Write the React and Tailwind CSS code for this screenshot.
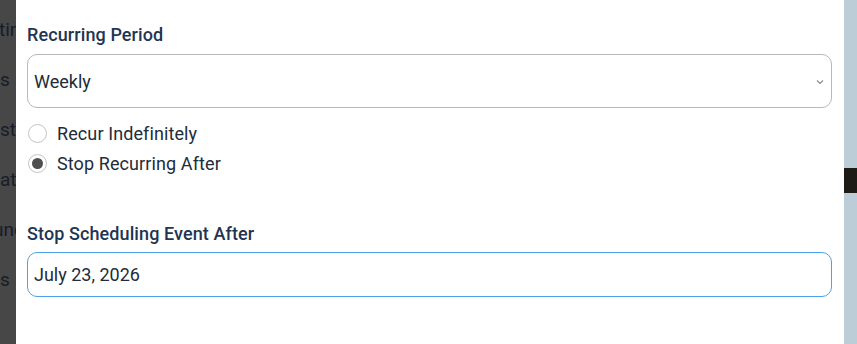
import React from "react";

export default function App() {
  return (
    <div
      className="flex h-[344px] w-[857px] overflow-hidden bg-white"
      style={{ fontFamily: "Roboto, 'Liberation Sans', sans-serif" }}
    >
      <div className="relative w-[16px] shrink-0 overflow-hidden bg-[#474747]">
        <div className="absolute left-0 top-0 flex flex-col items-start whitespace-nowrap pt-[5px] text-[19px] leading-[50px] text-[#171d27]">
          <span className="-ml-[1px]">tin</span>
          <span>s</span>
          <span>st</span>
          <span>at</span>
          <span className="-ml-[7px]">unc</span>
          <span>s</span>
        </div>
      </div>
      <div className="flex flex-1 flex-col bg-white pl-[11px] pr-[12px] pt-[24px] text-[#1f3552]">
        <label className="text-[18px] font-medium leading-[22px] tracking-[0.1px]">Recurring Period</label>
        <div className="mt-[8px] flex h-[54px] items-center justify-between rounded-[10px] border border-[#b8b8b8] pl-[6px] pr-[5px]">
          <span className="text-[18px] text-[#222c3a]">Weekly</span>
          <svg width="12" height="12" viewBox="0 0 12 12" className="mt-[1px]">
            <path d="M3 4.5 L6 7.5 L9 4.5" fill="none" stroke="#8a8a8a" strokeWidth="1.2" />
          </svg>
        </div>
        <div className="mt-[16px] flex flex-col gap-[11px]">
          <div className="flex h-[19px] items-center gap-[10px]">
            <span className="ml-[1px] h-[19px] w-[19px] rounded-full border border-[#c4c4c4] bg-white"></span>
            <span className="text-[18px] tracking-[0.1px] text-[#222c3a]">Recur Indefinitely</span>
          </div>
          <div className="flex h-[19px] items-center gap-[10px]">
            <span className="ml-[1px] flex h-[19px] w-[19px] items-center justify-center rounded-full border border-[#c4c4c4] bg-white">
              <span className="h-[11px] w-[11px] rounded-full bg-[#4f4f4f]"></span>
            </span>
            <span className="text-[18px] tracking-[0.1px] text-[#222c3a]">Stop Recurring After</span>
          </div>
        </div>
        <label className="mt-[50px] text-[18px] font-medium leading-[22px] tracking-[0.1px]">Stop Scheduling Event After</label>
        <div className="mt-[7px] flex h-[45px] items-center rounded-[10px] border border-[#4aa3ea] pl-[6px]">
          <span className="text-[18px] text-[#222c3a]">July 23, 2026</span>
        </div>
      </div>
      <div className="flex w-[13px] shrink-0 flex-col bg-[#bccdd8]">
        <div className="mt-[168px] h-[25px] bg-[#1e1a16]"></div>
      </div>
    </div>
  );
}
